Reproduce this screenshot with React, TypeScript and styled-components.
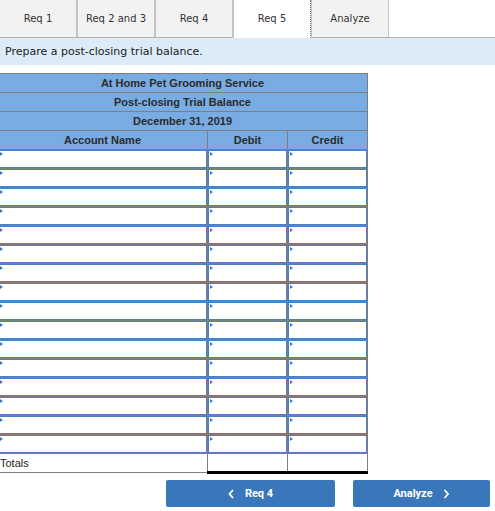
import React from "react";
import styled, { createGlobalStyle } from "styled-components";

const GlobalStyle = createGlobalStyle`
    html, body {
        margin: 0;
        padding: 0;
        background: #ffffff;
    }
    body {
        font-family: "Liberation Sans", Arial, sans-serif;
        overflow: hidden;
    }
`;

const tabs = ["Req 1", "Req 2 and 3", "Req 4", "Req 5", "Analyze"];
const activeTab = "Req 5";
const rowCount = 16;
const columnWidths = [210, 80, 80];

const Page = styled.div`
    width: 495px;
    height: 511px;
    overflow: hidden;
`;

const TabBar = styled.div`
    display: flex;
    height: 38px;
`;

const Tab = styled.div<{ $active: boolean }>`
    box-sizing: border-box;
    width: 78px;
    height: 38px;
    display: flex;
    align-items: center;
    justify-content: center;
    font-family: "DejaVu Sans", Verdana, sans-serif;
    font-size: 10px;
    color: #333;
    background: ${(p) => (p.$active ? "#ffffff" : "#f2f2f2")};
    border-right: 1px solid #c4c4c4;
    border-left: 1px solid #c4c4c4;
    border-bottom: ${(p) => (p.$active ? "1px solid transparent" : "1px solid #b0b0b0")};
    ${(p) => (p.$active ? "border-right: 1px dotted #5a6e90;" : "")}
    &:first-child {
        border-left: none;
        width: 77px;
    }
`;

const TabFiller = styled.div`
    flex: 1;
    border-bottom: 1px solid #b0b0b0;
`;

const Instructions = styled.div`
    height: 27px;
    display: flex;
    align-items: center;
    padding-left: 5px;
    background: #dbebf8;
    font-family: "DejaVu Sans", Verdana, sans-serif;
    font-size: 11px;
    color: #222;
`;

const Table = styled.table`
    margin: 8px 0 0 -3px;
    border-collapse: collapse;
    table-layout: fixed;
    width: 371px;
    font-size: 11px;
`;

const TitleCell = styled.td`
    height: 18px;
    padding: 0;
    background: #78ace3;
    border: 1px solid #7f7f7f;
    text-align: center;
    font-weight: bold;
    color: #2b2b2b;
`;

const HeadCell = styled(TitleCell).attrs({ as: "th" })``;

const DataCell = styled.td`
    height: 18px;
    padding: 0;
    border: 1px solid #7f7f7f;
`;

const InputBox = styled.div`
    position: relative;
    box-sizing: border-box;
    height: 18px;
    border: 1px solid #4a7fc2;
    background: #fff;
    &::before {
        content: "";
        position: absolute;
        left: 1px;
        top: 1px;
        border-top: 2.5px solid transparent;
        border-bottom: 2.5px solid transparent;
        border-left: 3px solid #3c78c0;
    }
`;

const TotalLabel = styled.td`
    height: 18px;
    padding: 0 0 0 2px;
    border: 1px solid #7f7f7f;
    color: #222;
`;

const TotalCell = styled.td`
    height: 16px;
    padding: 0;
    border: 1px solid #7f7f7f;
    border-top: 1px solid #000;
    border-bottom: 3px solid #000;
`;

const ButtonRow = styled.div`
    display: flex;
    justify-content: flex-end;
    gap: 18px;
    margin-top: 6px;
    padding-right: 5px;
`;

const NavButton = styled.button<{ $w: number }>`
    width: ${(p) => p.$w}px;
    height: 27px;
    border: none;
    border-radius: 2px;
    background: #3a76ba;
    color: #fff;
    font-family: Roboto, "Liberation Sans", Arial, sans-serif;
    font-weight: bold;
    font-size: 11px;
    display: flex;
    align-items: center;
    justify-content: center;
    gap: 10px;
    padding: 0;
`;

function Chevron(props: { dir: "left" | "right" }) {
    const d = props.dir === "left" ? "M5 1 L1.5 5 L5 9" : "M1.5 1 L5 5 L1.5 9";
    return (
        <svg width="7" height="10" viewBox="0 0 7 10">
            <path d={d} fill="none" stroke="#fff" strokeWidth="1.8" />
        </svg>
    );
}

export default function App() {
    const rows: JSX.Element[] = [];
    for (let i = 0; i < rowCount; i++) {
        rows.push(
            <tr key={i}>
                <DataCell>
                    <InputBox />
                </DataCell>
                <DataCell>
                    <InputBox />
                </DataCell>
                <DataCell>
                    <InputBox />
                </DataCell>
            </tr>
        );
    }
    return (
        <Page>
            <GlobalStyle />
            <TabBar>
                {tabs.map((t) => (
                    <Tab key={t} $active={t === activeTab}>
                        {t}
                    </Tab>
                ))}
                <TabFiller />
            </TabBar>
            <Instructions>Prepare a post-closing trial balance.</Instructions>
            <Table>
                <colgroup>
                    {columnWidths.map((w, i) => (
                        <col key={i} style={{ width: w }} />
                    ))}
                </colgroup>
                <thead>
                    <tr>
                        <TitleCell colSpan={3}>At Home Pet Grooming Service</TitleCell>
                    </tr>
                    <tr>
                        <TitleCell colSpan={3}>Post-closing Trial Balance</TitleCell>
                    </tr>
                    <tr>
                        <TitleCell colSpan={3}>December 31, 2019</TitleCell>
                    </tr>
                    <tr>
                        <HeadCell>Account Name</HeadCell>
                        <HeadCell>Debit</HeadCell>
                        <HeadCell>Credit</HeadCell>
                    </tr>
                </thead>
                <tbody>
                    {rows}
                    <tr>
                        <TotalLabel>Totals</TotalLabel>
                        <TotalCell />
                        <TotalCell />
                    </tr>
                </tbody>
            </Table>
            <ButtonRow>
                <NavButton $w={169}>
                    <Chevron dir="left" />
                    Req 4
                </NavButton>
                <NavButton $w={137}>
                    Analyze
                    <Chevron dir="right" />
                </NavButton>
            </ButtonRow>
        </Page>
    );
}
